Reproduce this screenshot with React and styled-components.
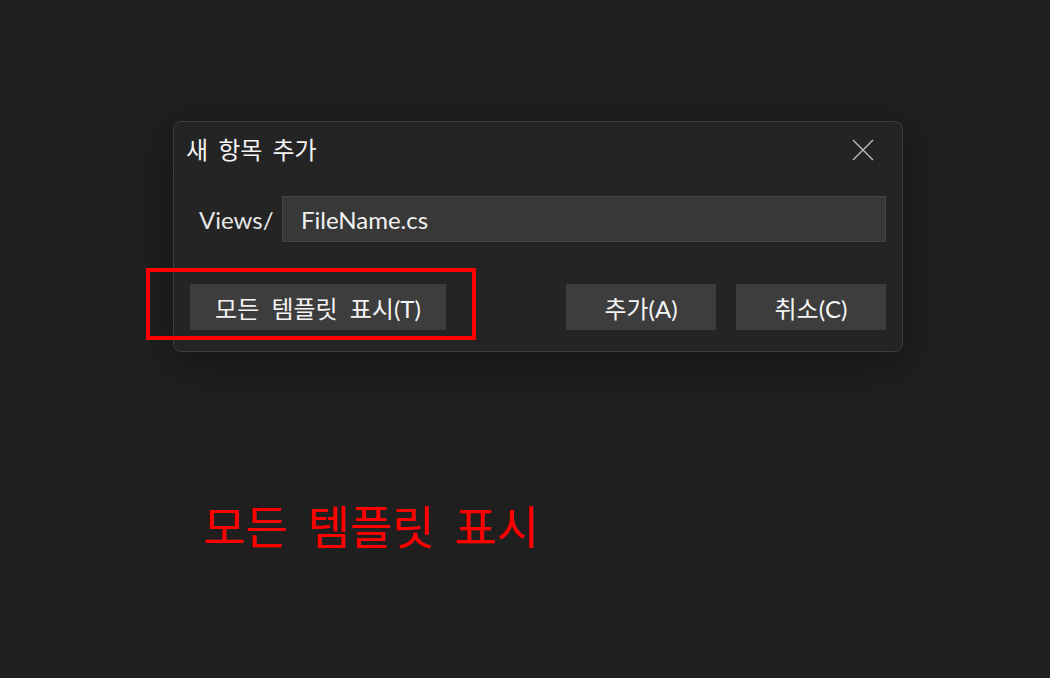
import React from 'react';
import styled, { createGlobalStyle } from 'styled-components';

const GlobalStyle = createGlobalStyle`
  html, body {
    margin: 0;
    padding: 0;
    background: #1f1f1f;
  }

  body {
    font-family: "Lato", "Noto Sans CJK KR", sans-serif;
    color: #f2f2f2;
  }
`;

const Page = styled.div`
  min-height: 678px;
  padding: 121px 0 0 173px;
  box-sizing: border-box;
`;

const Dialog = styled.section`
  width: 730px;
  box-sizing: border-box;
  background: #242424;
  border: 1px solid #3d3d3d;
  border-radius: 8px;
  box-shadow: 0 10px 40px rgba(0, 0, 0, 0.35);
  padding-bottom: 21px;
`;

const Header = styled.header`
  display: flex;
  align-items: center;
  justify-content: space-between;
  height: 56px;
  padding: 0 28px 0 12px;
`;

const Title = styled.h1`
  margin: 0 0 3px;
  font-size: 24px;
  font-weight: 400;
  word-spacing: 4px;
  color: #f4f4f4;
`;

const CloseButton = styled.button`
  display: flex;
  align-items: center;
  justify-content: center;
  width: 22px;
  height: 22px;
  padding: 0;
  border: 0;
  background: none;
  color: #bdbdbd;
  cursor: pointer;
`;

const Field = styled.div`
  display: flex;
  align-items: center;
  margin-top: 18px;
  padding: 0 16px 0 25px;
`;

const Label = styled.label`
  width: 83px;
  font-size: 24px;
  color: #e6e6e6;
`;

const Input = styled.input`
  flex: 1;
  height: 46px;
  box-sizing: border-box;
  padding: 0 0 0 18px;
  border: 1px solid #444;
  background: #383838;
  color: #f2f2f2;
  font-family: inherit;
  font-size: 24px;
  outline: none;
`;

const Actions = styled.div`
  display: flex;
  align-items: center;
  margin-top: 42px;
  padding: 0 16px;
`;

const Spot = styled.div`
  position: relative;
  margin-right: auto;
`;

const Highlight = styled.div`
  position: absolute;
  top: -16px;
  left: -44px;
  right: -30px;
  bottom: -10px;
  border: 4px solid #ff0000;
  pointer-events: none;
`;

const Button = styled.button`
  height: 46px;
  width: ${p => p.$width || 150}px;
  margin-left: ${p => p.$gap || 0}px;
  padding: 0;
  border: 0;
  background: #3d3d3d;
  color: #f4f4f4;
  font-family: inherit;
  font-size: 24px;
  word-spacing: 6px;
  cursor: pointer;
`;

const Caption = styled.p`
  margin: 152px 0 0 30px;
  font-size: 46px;
  color: #ff0000;
  word-spacing: 8px;
  line-height: 1;
`;

const CloseIcon = () => (
  <svg width="22" height="22" viewBox="0 0 22 22" fill="none" stroke="currentColor" strokeWidth="1.4">
    <path d="M1 1L21 21M21 1L1 21" />
  </svg>
);

export default function App() {
  return (
    <>
      <GlobalStyle />
      <Page>
        <Dialog>
          <Header>
            <Title>새 항목 추가</Title>
            <CloseButton aria-label="닫기">
              <CloseIcon />
            </CloseButton>
          </Header>
          <Field>
            <Label htmlFor="file-name">Views/</Label>
            <Input id="file-name" defaultValue="FileName.cs" />
          </Field>
          <Actions>
            <Spot>
              <Button $width={256}>모든 템플릿 표시(T)</Button>
              <Highlight />
            </Spot>
            <Button>추가(A)</Button>
            <Button $gap={20}>취소(C)</Button>
          </Actions>
        </Dialog>
        <Caption>모든 템플릿 표시</Caption>
      </Page>
    </>
  );
}
